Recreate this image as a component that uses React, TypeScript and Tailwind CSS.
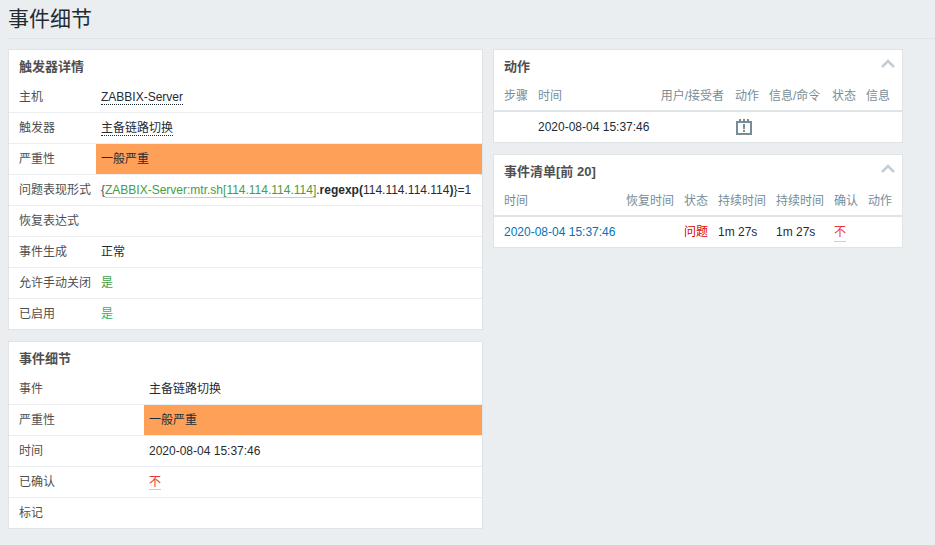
const font = '[font-family:"Liberation_Sans","Noto_Sans_CJK_SC",sans-serif]';

function Row({ label, wide, last, children, orange }: { label: string; wide?: boolean; last?: boolean; children?: React.ReactNode; orange?: boolean }) {
  return (
    <div className={`flex ${last ? "h-[30px]" : "h-[31px] border-b border-[#ebeef0]"}`}>
      <div className={`${wide ? "w-[135px]" : "w-[87px]"} shrink-0 pl-[10px] leading-[30px] text-[#4f4f4f]`}>{label}</div>
      <div className={`flex-1 pl-[5px] leading-[30px] whitespace-nowrap ${orange ? "bg-[#ffa059] text-[#1f2c33]" : ""}`}>{children}</div>
    </div>
  );
}

function CardTitle({ title, collapse }: { title: string; collapse?: boolean }) {
  return (
    <div className="flex h-[32px] items-center justify-between pl-[10px] pr-[7px] pt-[2px]">
      <h4 className="text-[13px] font-bold text-[#4f4f4f]">{title}</h4>
      {collapse && (
        <svg width="14" height="9" viewBox="0 0 14 9" className="mb-[8px]">
          <path d="M1 8 L7 2 L13 8" fill="none" stroke="#c5ced4" strokeWidth="2.6" />
        </svg>
      )}
    </div>
  );
}

function Th({ className, children }: { className: string; children?: React.ReactNode }) {
  return <div className={`shrink-0 ${className}`}>{children}</div>;
}

export default function App() {
  return (
    <div className={`${font} h-[545px] w-[935px] overflow-hidden bg-[#ebeef0] text-[12px] text-[#1f2c33]`}>
      <header className="ml-2 flex h-[39px] items-center border-b border-[#dfe4e7]">
        <h1 className="text-[21px] font-normal leading-[28px] text-[#1f2c33]">事件细节</h1>
      </header>

      <div className="ml-2 mt-[10px] flex gap-[10px]">
        <div className="flex w-[475px] flex-col gap-[11px]">
          <section className="border border-[#dfe4e7] bg-white">
            <CardTitle title="触发器详情" />
            <Row label="主机"><span className="border-b border-dotted border-[#1f2c33]">ZABBIX-Server</span></Row>
            <Row label="触发器"><span className="border-b border-dotted border-[#1f2c33]">主备链路切换</span></Row>
            <Row label="严重性" orange>一般严重</Row>
            <Row label="问题表现形式">
              <span className="text-[#4f4f4f]">{"{"}</span>
              <span className="border-b border-[#c5ced4] text-[#429e47]">ZABBIX-Server:mtr.sh[114.114.114.114]</span>
              <span>.</span>
              <b>regexp(</b>
              <span>114.114.114.114</span>
              <b>)</b>
              <span>{"}=1"}</span>
            </Row>
            <Row label="恢复表达式" />
            <Row label="事件生成">正常</Row>
            <Row label="允许手动关闭"><span className="text-[#429e47]">是</span></Row>
            <Row label="已启用" last><span className="text-[#34af67]">是</span></Row>
          </section>

          <section className="border border-[#dfe4e7] bg-white">
            <CardTitle title="事件细节" />
            <Row label="事件" wide>主备链路切换</Row>
            <Row label="严重性" wide orange>一般严重</Row>
            <Row label="时间" wide>2020-08-04 15:37:46</Row>
            <Row label="已确认" wide><span className="border-b border-[#c5ced4] text-[#e33734]">不</span></Row>
            <Row label="标记" wide last />
          </section>
        </div>

        <div className="flex w-[410px] flex-col gap-[11px] self-start">
          <section className="border border-[#dfe4e7] bg-white">
            <CardTitle title="动作" collapse />
            <div className="flex h-[30px] items-center border-b-[2px] border-[#dfe4e7] pl-[10px] text-[#768d99]">
              <Th className="w-[34px]">步骤</Th>
              <Th className="w-[112px]">时间</Th>
              <Th className="w-[74px] text-right">用户/接受者</Th>
              <Th className="ml-[11px] w-[24px]">动作</Th>
              <Th className="ml-[10px] w-[52px]">信息/命令</Th>
              <Th className="ml-[11px] w-[24px]">状态</Th>
              <Th className="ml-[10px] w-[24px]">信息</Th>
            </div>
            <div className="flex h-[30px] items-center pl-[44px]">
              <span className="w-[198px]">2020-08-04 15:37:46</span>
              <svg width="16" height="16" viewBox="0 0 16 16">
                <path d="M0 2h16v14H0z M2 4v10h12V4z" fill="#768d99" fillRule="evenodd" />
                <path d="M3 0h2v2H3z M7 0h2v2H7z M11 0h2v2h-2z M7 5h2v5H7z M7 11h2v2H7z" fill="#768d99" />
              </svg>
            </div>
          </section>

          <section className="border border-[#dfe4e7] bg-white">
            <CardTitle title="事件清单[前 20]" collapse />
            <div className="flex h-[30px] items-center border-b-[2px] border-[#dfe4e7] pl-[10px] text-[#768d99]">
              <Th className="w-[122px]">时间</Th>
              <Th className="w-[48px]">恢复时间</Th>
              <Th className="ml-[10px] w-[24px]">状态</Th>
              <Th className="ml-[10px] w-[48px]">持续时间</Th>
              <Th className="ml-[10px] w-[48px]">持续时间</Th>
              <Th className="ml-[10px] w-[24px]">确认</Th>
              <Th className="ml-[10px] w-[24px]">动作</Th>
            </div>
            <div className="flex h-[30px] items-center pl-[10px]">
              <span className="w-[180px] text-[#0275b8]">2020-08-04 15:37:46</span>
              <span className="w-[24px] text-[#dc0000]">问题</span>
              <span className="ml-[10px] w-[48px]">1m 27s</span>
              <span className="ml-[10px] w-[48px]">1m 27s</span>
              <span className="ml-[10px] border-b border-[#c5ced4] text-[#e33734]">不</span>
            </div>
          </section>
        </div>
      </div>
    </div>
  );
}
